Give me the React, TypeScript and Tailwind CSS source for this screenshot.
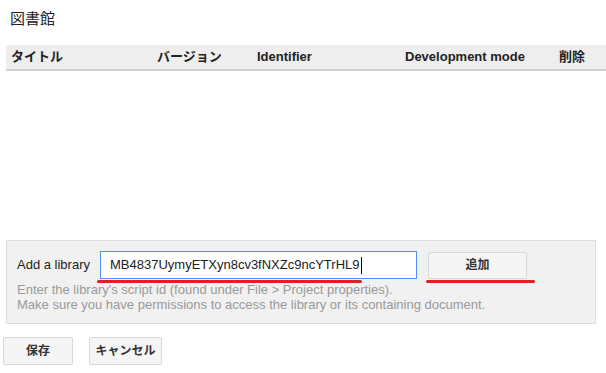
export default function App() {
  const font = { fontFamily: '"Liberation Sans", "Noto Sans CJK JP", sans-serif' };
  return (
    <div className="relative h-[373px] w-[606px] overflow-hidden bg-white text-[#222]" style={font}>
      <div className="pl-[10px] pt-[9px] text-[15px] leading-[20px]">図書館</div>

      <div className="ml-[6px] mt-[16px] flex h-[26px] items-center border-b-2 border-[#d0d0d0] bg-[#eeeeee] text-[13px] font-bold">
        <div className="w-[151px] pl-[5px]">タイトル</div>
        <div className="w-[100px]">バージョン</div>
        <div className="w-[148px]">Identifier</div>
        <div className="w-[154px]">Development mode</div>
        <div>削除</div>
      </div>

      <div className="h-[169px]" />

      <div className="relative ml-[6px] w-[590px] border border-[#dcdcdc] bg-[#f1f1f1] pb-[11px] pl-[10px] pt-[10px]">
        <div className="flex items-center">
          <div className="w-[83px] text-[13px]">Add a library</div>
          <div className="flex h-[28px] w-[317px] items-center border border-[#4d90fe] bg-white pl-[9px] text-[13px] text-[#222]">
            MB4837UymyETXyn8cv3fNXZc9ncYTrHL9<span className="ml-[1px] h-[17px] w-px bg-black" />
          </div>
          <div className="ml-[11px] flex h-[27px] w-[99px] items-center justify-center rounded-[2px] border border-[#d8d8d8] bg-[#f5f5f5] text-[12px] font-semibold text-[#333]">
            追加
          </div>
        </div>
        <div className="mt-[3px] text-[13px] leading-[15px] text-[#999]">
          <div>Enter the library's script id (found under File &gt; Project properties).</div>
          <div>Make sure you have permissions to access the library or its containing document.</div>
        </div>
        <div className="absolute left-[90px] top-[39px] h-[3px] w-[265px] rounded-full bg-[#e02020]" />
        <div className="absolute left-[419px] top-[39px] h-[3px] w-[109px] rounded-full bg-[#e02020]" />
      </div>

      <div className="ml-[3px] mt-[13px] flex gap-[16px]">
        <div className="flex h-[28px] w-[70px] items-center justify-center rounded-[2px] border border-[#d8d8d8] bg-[#f5f5f5] text-[12px] font-semibold text-[#333]">
          保存
        </div>
        <div className="flex h-[28px] w-[73px] items-center justify-center rounded-[2px] border border-[#d8d8d8] bg-[#f5f5f5] text-[12px] font-semibold text-[#333]">
          キャンセル
        </div>
      </div>
    </div>
  );
}
